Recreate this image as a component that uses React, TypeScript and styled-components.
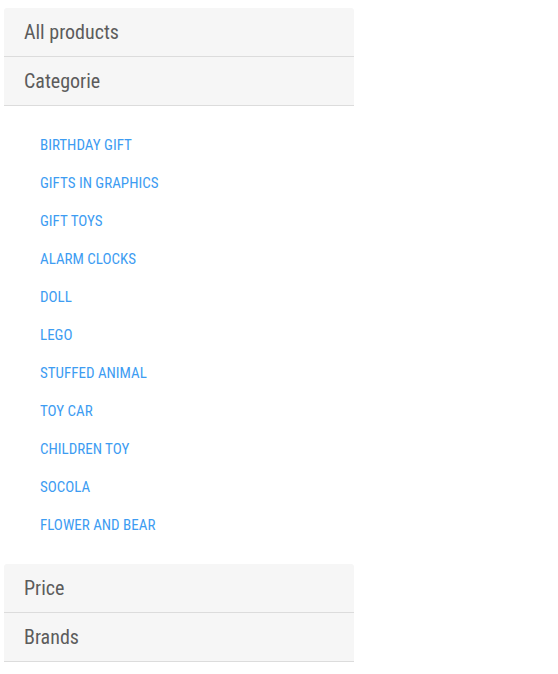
import React from 'react';
import styled, { createGlobalStyle } from 'styled-components';

const GlobalStyle = createGlobalStyle`
  body {
    margin: 0;
    padding: 8px 4px;
    background: #ffffff;
    font-family: 'Roboto Condensed', 'Liberation Sans Narrow', Roboto, sans-serif;
  }
`;

const categories = [
  'Birthday gift',
  'Gifts in graphics',
  'Gift toys',
  'Alarm clocks',
  'Doll',
  'Lego',
  'Stuffed animal',
  'Toy car',
  'Children toy',
  'Socola',
  'Flower and bear',
];

const Sidebar = styled.aside`
  width: 350px;
`;

const Header = styled.div<{ $first?: boolean }>`
  height: 48px;
  display: flex;
  align-items: center;
  padding: 0 20px;
  background: #f6f6f6;
  border-bottom: 1px solid #dcdcdc;
  border-radius: ${(p) => (p.$first ? '3px 3px 0 0' : '0')};
  color: #5c5c5c;
  font-size: 20px;
`;

const List = styled.ul`
  list-style: none;
  margin: 0;
  padding: 19px 0 21px;
`;

const Item = styled.li`
  height: 38px;
  display: flex;
  align-items: center;
  padding-left: 36px;
`;

const Link = styled.a`
  color: #3d9cf2;
  font-size: 15px;
  line-height: 18px;
  padding-top: 2px;
  text-transform: uppercase;
  text-decoration: none;
`;

export default function App() {
  return (
    <>
      <GlobalStyle />
      <Sidebar>
        <Header $first>All products</Header>
        <Header>Categorie</Header>
        <List>
          {categories.map((c) => (
            <Item key={c}>
              <Link href="#">{c}</Link>
            </Item>
          ))}
        </List>
        <Header $first>Price</Header>
        <Header>Brands</Header>
      </Sidebar>
    </>
  );
}
